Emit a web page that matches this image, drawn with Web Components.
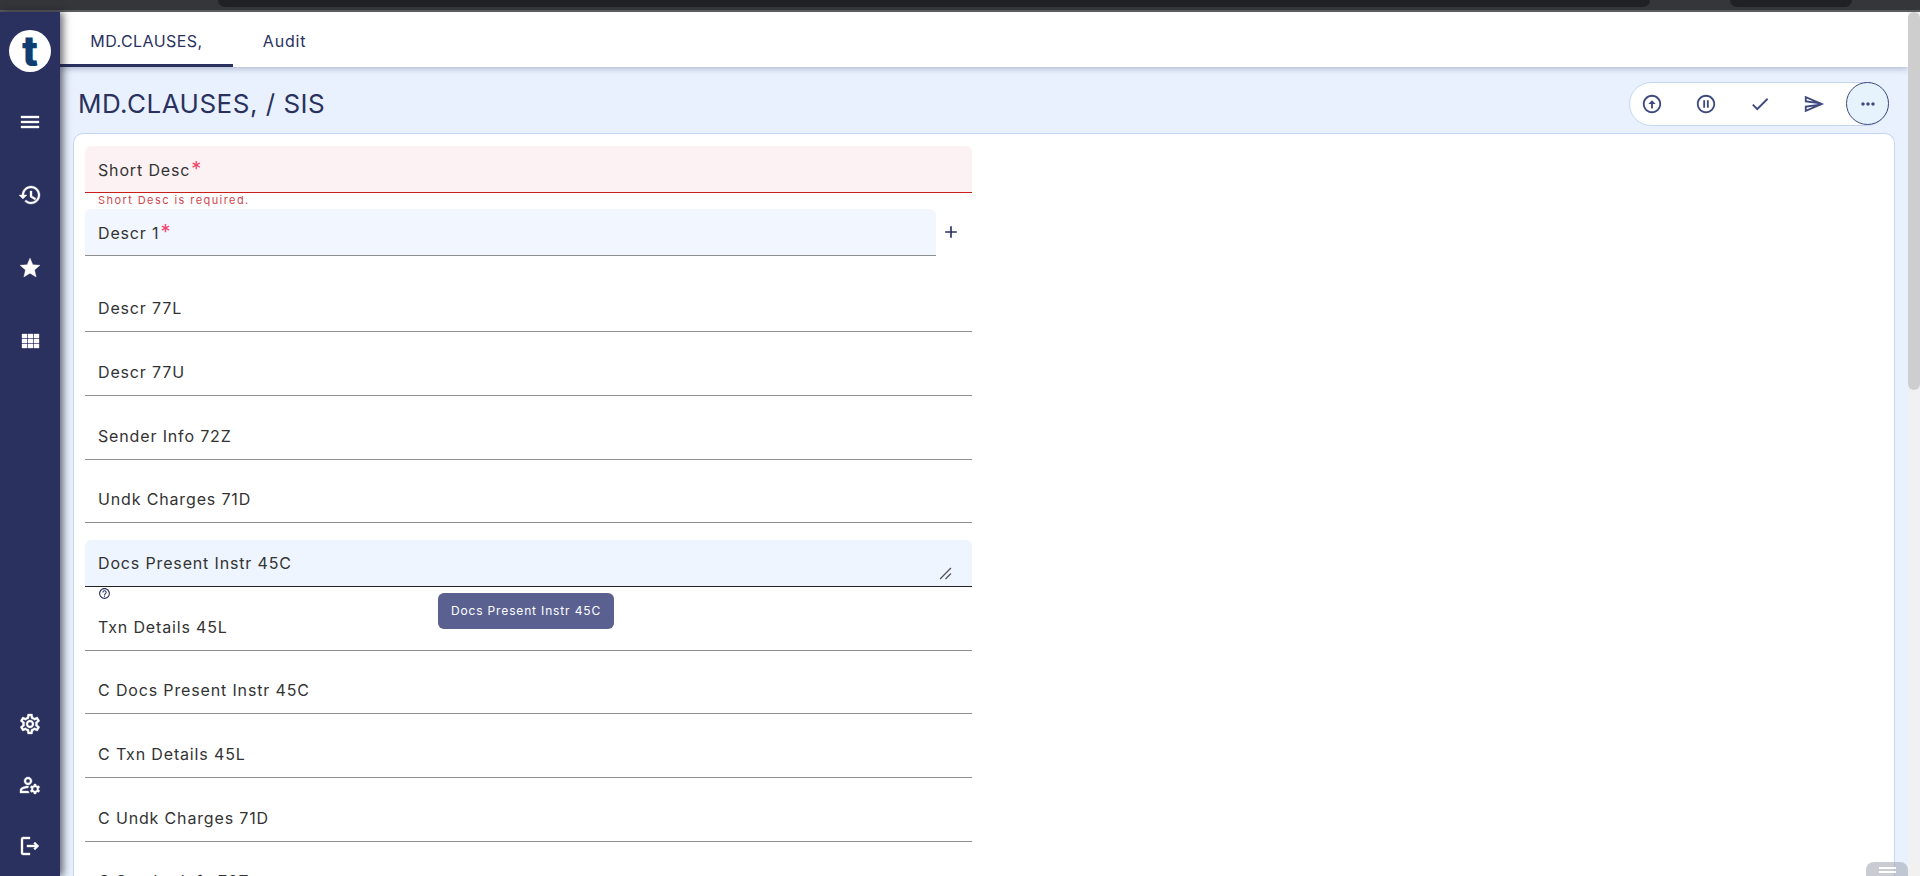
<!DOCTYPE html>
<html>
<head>
<meta charset="utf-8">
<title>MD.CLAUSES</title>
<style>
  html, body { margin: 0; height: 100%; overflow: hidden; }
  body { display: flex; flex-direction: column; font-family: Inter, "Liberation Sans", sans-serif; }
</style>
</head>
<body>
<browser-strip></browser-strip>
<app-shell>
  <side-nav slot="nav"></side-nav>
  <tab-bar slot="tabs"></tab-bar>
  <page-head slot="head" heading="MD.CLAUSES, / SIS"></page-head>
  <form-card slot="card">
    <form-field label="Short Desc" required state="error" error="Short Desc is required."></form-field>
    <form-field label="Descr 1" required state="filled" adder></form-field>
    <form-field label="Descr 77L"></form-field>
    <form-field label="Descr 77U"></form-field>
    <form-field label="Sender Info 72Z"></form-field>
    <form-field label="Undk Charges 71D"></form-field>
    <form-field label="Docs Present Instr 45C" state="focus" tip="Docs Present Instr 45C"></form-field>
    <form-field label="Txn Details 45L"></form-field>
    <form-field label="C Docs Present Instr 45C"></form-field>
    <form-field label="C Txn Details 45L"></form-field>
    <form-field label="C Undk Charges 71D"></form-field>
    <form-field label="C Sender Info 72Z"></form-field>
  </form-card>
</app-shell>

<script>
// iconos material, todos en caja de 24x24
const ICONS = {
  menu: 'M3 18h18v-2H3v2zm0-5h18v-2H3v2zm0-7v2h18V6H3z',
  history: 'M13 3c-4.97 0-9 4.03-9 9H1l3.89 3.89.07.14L9 12H6c0-3.87 3.13-7 7-7s7 3.13 7 7-3.13 7-7 7c-1.93 0-3.68-.79-4.94-2.06l-1.42 1.42C8.27 19.99 10.51 21 13 21c4.97 0 9-4.03 9-9s-4.03-9-9-9zm-1 5v6l5 3 1-1.7-4-2.4V8h-2z',
  star: 'M12 17.27L18.18 21l-1.64-7.03L22 9.24l-7.19-.61L12 2 9.19 8.63 2 9.24l5.46 4.73L5.82 21z',
  apps: 'M4 5h5v4H4zM10 5h5v4h-5zM16 5h5v4h-5zM4 10h5v4H4zM10 10h5v4h-5zM16 10h5v4h-5zM4 15h5v4H4zM10 15h5v4h-5zM16 15h5v4h-5z',
  settings: 'M19.43 12.98c.04-.32.07-.64.07-.98 0-.34-.03-.66-.07-.98l2.11-1.65c.19-.15.24-.42.12-.64l-2-3.46c-.12-.22-.39-.3-.61-.22l-2.49 1c-.52-.4-1.08-.73-1.69-.98l-.38-2.65C14.46 2.18 14.25 2 14 2h-4c-.25 0-.46.18-.49.42l-.38 2.65c-.61.25-1.17.59-1.69.98l-2.49-1c-.23-.09-.49 0-.61.22l-2 3.46c-.13.22-.07.49.12.64l2.11 1.65c-.04.32-.07.65-.07.98 0 .33.03.66.07.98l-2.11 1.65c-.19.15-.24.42-.12.64l2 3.46c.12.22.39.3.61.22l2.49-1c.52.4 1.08.73 1.69.98l.38 2.65c.03.24.24.42.49.42h4c.25 0 .46-.18.49-.42l.38-2.65c.61-.25 1.17-.59 1.69-.98l2.49 1c.23.09.49 0 .61-.22l2-3.46c.12-.22.07-.49-.12-.64l-2.11-1.65zM17.45 11.27c.04.31.05.52.05.73 0 .21-.02.43-.05.73l-.14 1.13.89.7 1.08.84-.7 1.21-1.27-.51-1.04-.42-.9.68c-.43.32-.84.56-1.25.73l-1.06.43-.16 1.13-.2 1.35h-1.4l-.19-1.35-.16-1.13-1.06-.43c-.43-.18-.83-.41-1.23-.71l-.91-.7-1.06.43-1.27.51-.7-1.21 1.08-.84.89-.7-.14-1.13c-.03-.31-.05-.54-.05-.74s.02-.43.05-.73l.14-1.13-.89-.7-1.08-.84.7-1.21 1.27.51 1.04.42.9-.68c.43-.32.84-.56 1.25-.73l1.06-.43.16-1.13.2-1.35h1.39l.19 1.35.16 1.13 1.06.43c.43.18.83.41 1.23.71l.91.7 1.06-.43 1.27-.51.7 1.21-1.07.85-.89.7.14 1.13zM12 8c-2.21 0-4 1.79-4 4s1.79 4 4 4 4-1.79 4-4-1.79-4-4-4zm0 6c-1.1 0-2-.9-2-2s.9-2 2-2 2 .9 2 2-.9 2-2 2z',
  manage: 'M4 18v-.65c0-.34.16-.66.41-.81C6.1 15.53 8.03 15 10 15c.03 0 .05 0 .08.01.1-.7.3-1.37.59-1.98-.22-.02-.44-.03-.67-.03-2.42 0-4.68.67-6.61 1.82-.88.52-1.39 1.5-1.39 2.53V20h9.26c-.42-.6-.75-1.28-.97-2H4zM10 12c2.21 0 4-1.79 4-4s-1.79-4-4-4-4 1.79-4 4 1.79 4 4 4zm0-6c1.1 0 2 .9 2 2s-.9 2-2 2-2-.9-2-2 .9-2 2-2zM20.75 16c0-.22-.03-.42-.06-.63l1.14-1.01-1-1.73-1.45.49c-.32-.27-.68-.48-1.08-.63L18 11h-2l-.3 1.49c-.4.15-.76.36-1.08.63l-1.45-.49-1 1.73 1.14 1.01c-.03.21-.06.41-.06.63s.03.42.06.63l-1.14 1.01 1 1.73 1.45-.49c.32.27.68.48 1.08.63L16 21h2l.3-1.49c.4-.15.76-.36 1.08-.63l1.45.49 1-1.73-1.14-1.01c.03-.21.06-.41.06-.63zM17 18c-1.1 0-2-.9-2-2s.9-2 2-2 2 .9 2 2-.9 2-2 2z',
  logout: 'M17 8l-1.41 1.41L17.17 11H9v2h8.17l-1.58 1.58L17 16l4-4-4-4zM5 5h7V3H5c-1.1 0-2 .9-2 2v14c0 1.1.9 2 2 2h7v-2H5V5z',
  up: 'M12 20c-4.41 0-8-3.59-8-8s3.59-8 8-8 8 3.59 8 8-3.59 8-8 8zm0-18C6.48 2 2 6.48 2 12s4.48 10 10 10 10-4.48 10-10S17.52 2 12 2zm-1 15h2v-5h3l-4-4-4 4h3v5z',
  pause: 'M9 16h2V8H9v8zm3-14C6.48 2 2 6.48 2 12s4.48 10 10 10 10-4.48 10-10S17.52 2 12 2zm0 18c-4.41 0-8-3.59-8-8s3.59-8 8-8 8 3.59 8 8-3.59 8-8 8zm1-4h2V8h-2v8z',
  check: 'M9 16.17L4.83 12l-1.42 1.41L9 19 21 7l-1.41-1.41z',
  send: 'M4.01 6.03l7.51 3.22-7.52-1 .01-2.22zm7.5 8.72L4 17.97v-2.22l7.51-1zM2.01 3L2 10l15 2-15 2 .01 7L23 12 2.01 3z',
  more: 'M6 10c-1.1 0-2 .9-2 2s.9 2 2 2 2-.9 2-2-.9-2-2-2zm12 0c-1.1 0-2 .9-2 2s.9 2 2 2 2-.9 2-2-.9-2-2-2zm-6 0c-1.1 0-2 .9-2 2s.9 2 2 2 2-.9 2-2-.9-2-2-2z',
  help: 'M11 18h2v-2h-2v2zm1-16C6.48 2 2 6.48 2 12s4.48 10 10 10 10-4.48 10-10S17.52 2 12 2zm0 18c-4.41 0-8-3.59-8-8s3.59-8 8-8 8 3.59 8 8-3.59 8-8 8zm0-14c-2.21 0-4 1.79-4 4h2c0-1.1.9-2 2-2s2 .9 2 2c0 2-3 1.75-3 5h2c0-2.25 3-2.5 3-5 0-2.21-1.79-4-4-4z',
  plus: 'M19 13h-6v6h-2v-6H5v-2h6V5h2v6h6v2z'
}

class UiIcon extends HTMLElement {
  connectedCallback() {
    const size = this.getAttribute('size') || 24
    this.attachShadow({mode: 'open'}).innerHTML = `
      <style>
        :host { display: inline-flex; width: ${size}px; height: ${size}px; color: inherit; }
        svg { width: 100%; height: 100%; fill: currentColor; }
      </style>
      <svg viewBox="0 0 24 24"><path d="${ICONS[this.getAttribute('name')]}"/></svg>`
  }
}
customElements.define('ui-icon', UiIcon)

// franja oscura del navegador, arriba de todo
class BrowserStrip extends HTMLElement {
  connectedCallback() {
    this.attachShadow({mode: 'open'}).innerHTML = `
      <style>
        :host { display: flex; flex: none; height: 12px; box-sizing: border-box; background: #35363a; border-bottom: 2px solid #5c5d60; }
        div { height: 7px; background: #202124; border-radius: 0 0 8px 8px; }
        .a { margin-left: 218px; width: 1432px; }
        .b { margin-left: 80px; width: 122px; }
      </style>
      <div class="a"></div><div class="b"></div>`
  }
}
customElements.define('browser-strip', BrowserStrip)

class AppShell extends HTMLElement {
  constructor() {
    super()
    this.attachShadow({mode: 'open'}).innerHTML = `
      <style>
        :host { display: flex; flex: 1; min-height: 0; position: relative; }
        main { flex: 1; min-width: 0; display: flex; flex-direction: column; background: #e9f1fe; overflow: hidden; }
        .bar { flex: none; width: 12px; background: #f1f1f1; }
        .thumb { height: 378px; background: #cfcece; border-radius: 6px; }
        .grip {
          position: absolute; right: 12px; bottom: 0; width: 42px; height: 14px;
          display: flex; flex-direction: column; gap: 2px; align-items: center; padding-top: 5px; box-sizing: border-box;
          background: rgba(165,170,180,.6); border-radius: 8px 8px 0 0;
        }
        .grip i { width: 17px; height: 2px; background: #fff; }
      </style>
      <slot name="nav"></slot>
      <main>
        <slot name="tabs"></slot>
        <slot name="head"></slot>
        <slot name="card"></slot>
      </main>
      <div class="bar"><div class="thumb"></div></div>
      <div class="grip"><i></i><i></i></div>`
  }
}
customElements.define('app-shell', AppShell)

class SideNav extends HTMLElement {
  connectedCallback() {
    const item = n => `<div class="it"><ui-icon name="${n}"></ui-icon></div>`
    this.attachShadow({mode: 'open'}).innerHTML = `
      <style>
        :host {
          display: flex; flex-direction: column; flex: none; width: 60px; color: #fff;
          stroke: #fff; stroke-width: .35;
          background: #2a315f; box-shadow: 3px 0 8px rgba(20,20,30,.65); position: relative; z-index: 2;
        }
        .logo {
          width: 42px; height: 42px; margin: 18px 0 13px 9px; border-radius: 50%; background: #fff;
          display: flex; align-items: center; justify-content: center;
          color: #0f3e73; font: 800 42px/42px Inter, "Liberation Sans", sans-serif;
        }
        .top .it { height: 73px; }
        .bottom { margin-top: auto; }
        .bottom .it { height: 61px; }
        .it { display: flex; align-items: center; justify-content: center; }
      </style>
      <div class="logo">t</div>
      <div class="top">${['menu', 'history', 'star', 'apps'].map(item).join('')}</div>
      <div class="bottom">${['settings', 'manage', 'logout'].map(item).join('')}</div>`
  }
}
customElements.define('side-nav', SideNav)

class TabBar extends HTMLElement {
  connectedCallback() {
    this.attachShadow({mode: 'open'}).innerHTML = `
      <style>
        :host {
          display: flex; flex: none; height: 55px; background: #fff; position: relative; z-index: 1;
          box-shadow: 0 2px 6px rgba(40,50,90,.28); color: #2a315f; font-size: 16px; letter-spacing: .45px;
        }
        div { display: flex; align-items: center; justify-content: center; box-sizing: border-box; }
        .on { width: 173px; border-bottom: 3px solid #2a315f; padding-top: 5px; }
        .off { width: 103px; padding-top: 3px; letter-spacing: .8px; }
      </style>
      <div class="on">MD.CLAUSES,</div><div class="off">Audit</div>`
  }
}
customElements.define('tab-bar', TabBar)

class PageHead extends HTMLElement {
  connectedCallback() {
    const btn = n => `<span class="btn"><ui-icon name="${n}" size="22"></ui-icon></span>`
    this.attachShadow({mode: 'open'}).innerHTML = `
      <style>
        :host {
          display: flex; flex: none; height: 66px; box-sizing: border-box; padding: 15px 19px 0 18px;
          justify-content: space-between; align-items: flex-start;
        }
        h1 { margin: 0; font-size: 26px; line-height: 44px; font-weight: 400; color: #2a315f; letter-spacing: .5px; }
        .pill {
          display: flex; height: 44px; box-sizing: border-box; width: 260px; padding-left: 0;
          background: #fff; border: 1px solid #c5d6f3; border-radius: 22px; color: #3f4a7e;
        }
        .btn { width: 54px; display: flex; align-items: center; justify-content: center; }
        .btn:first-child { margin-left: -5px; }
        .more {
          width: 43px; height: 43px; margin: -1px -1px 0 auto; box-sizing: border-box; border-radius: 50%;
          background: #e6f3fc; border: 1px solid #3f4a7e; display: flex; align-items: center; justify-content: center;
        }
      </style>
      <h1>${this.getAttribute('heading')}</h1>
      <div class="pill">
        ${['up', 'pause', 'check', 'send'].map(btn).join('')}
        <span class="more"><ui-icon name="more" size="20"></ui-icon></span>
      </div>`
  }
}
customElements.define('page-head', PageHead)

class FormCard extends HTMLElement {
  constructor() {
    super()
    this.attachShadow({mode: 'open'}).innerHTML = `
      <style>
        :host {
          display: block; flex: 1; margin: 0 13px; padding: 12px 11px 0; background: #fff;
          border: 1px solid #c5d6f3; border-bottom: 0; border-radius: 10px 10px 0 0;
        }
        .col { width: 887px; }
      </style>
      <div class="col"><slot></slot></div>`
  }
}
customElements.define('form-card', FormCard)

class FormField extends HTMLElement {
  connectedCallback() {
    const state = this.getAttribute('state') || ''
    const star = this.hasAttribute('required') ? '<b>*</b>' : ''
    const adder = this.hasAttribute('adder')
    const tip = this.getAttribute('tip')
    const error = this.getAttribute('error')
    this.attachShadow({mode: 'open'}).innerHTML = `
      <style>
        :host { display: block; position: relative; }
        :host([adder]) { margin-bottom: 12.67px; }
        :host([error]) .sub { height: 16px; }
        .row { display: flex; align-items: center; }
        .box {
          flex: 1; position: relative; height: 47px; box-sizing: border-box; padding: 0 13px;
          display: flex; align-items: center; border-bottom: 1px solid #8f8f8f; border-radius: 6px 6px 0 0;
          color: #333; font-size: 16px; letter-spacing: .85px;
        }
        .error, .filled, .focus { padding-top: 1px; }
        b { color: #f0446c; font-weight: 400; font-size: 20px; line-height: 16px; margin-left: 1px; }
        .error { background: #fdf2f3; border-color: #c81e1e; }
        .filled { background: #f2f6fe; }
        .focus { background: #eef5fe; border-color: #222; }
        .add { flex: none; width: 36px; display: flex; padding-left: 5px; box-sizing: border-box; margin-top: -2px; color: #2a315f; }
        .sub { height: 16.67px; padding-left: 13px; color: #d0484f; font-size: 11px; line-height: 15px; letter-spacing: 1.43px; }
        .sub ui-icon { color: #2a315f; }
        .resize { position: absolute; right: 20px; bottom: 6px; width: 13px; height: 13px; }
        .tip {
          position: absolute; left: 353px; top: 53px; height: 36px; width: 176px; box-sizing: border-box;
          display: flex; align-items: center; justify-content: center;
          background: #5a6191; color: #fff; border-radius: 6px; font-size: 12px; letter-spacing: .85px; z-index: 3;
        }
      </style>
      <div class="row">
        <div class="box ${state}">
          <span>${this.getAttribute('label')}${star}</span>
          ${state === 'focus' ? '<svg class="resize" viewBox="0 0 12 12"><path d="M1 11L11 1M6 11l5-5" stroke="#555" stroke-width="1.2" fill="none"/></svg>' : ''}
        </div>
        ${adder ? '<span class="add"><ui-icon name="plus" size="20"></ui-icon></span>' : ''}
      </div>
      <div class="sub">${error || ''}${tip ? '<ui-icon name="help" size="13"></ui-icon>' : ''}</div>
      ${tip ? `<div class="tip">${tip}</div>` : ''}`
  }
}
customElements.define('form-field', FormField)
</script>
</body>
</html>
